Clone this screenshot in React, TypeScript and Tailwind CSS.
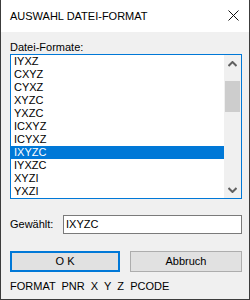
import { useState } from "react";

const formats = [
  "IYXZ",
  "CXYZ",
  "CYXZ",
  "XYZC",
  "YXZC",
  "ICXYZ",
  "ICYXZ",
  "IXYZC",
  "IYXZC",
  "XYZI",
  "YXZI",
];

export default function App() {
  const [selected, setSelected] = useState("IXYZC");

  return (
    <div
      className="flex h-[300px] w-[250px] flex-col border-r border-b border-l border-[#3c3c3c] bg-[#f0f0f0] text-[11px] text-black"
      style={{ fontFamily: '"Liberation Sans", Arial, sans-serif' }}
    >
      {/* title bar */}
      <div className="flex h-[32px] shrink-0 items-center justify-between bg-white pl-[9px] pr-[10px]">
        <span className="text-[11px]">AUSWAHL DATEI-FORMAT</span>
        <svg width="11" height="11" viewBox="0 0 11 11" className="mb-[1px]">
          <path d="M0.5 0.5 L10.5 10.5 M10.5 0.5 L0.5 10.5" stroke="#111" strokeWidth="1" />
        </svg>
      </div>

      <div className="flex flex-1 flex-col pl-[9px] pr-[7px]">
        <div className="mt-[9px] h-[13px] leading-[13px]">Datei-Formate:</div>

        {/* list box */}
        <div className="flex h-[145px] border border-[#0078d7] bg-white">
          <div className="flex-1 overflow-hidden">
            {formats.map((f) => (
              <div
                key={f}
                onClick={() => setSelected(f)}
                className={
                  f === selected
                    ? "h-[13px] bg-[#0078d7] pl-[3px] leading-[13px] text-white"
                    : "h-[13px] pl-[3px] leading-[13px]"
                }
              >
                {f}
              </div>
            ))}
          </div>
          <div className="flex w-[17px] flex-col bg-[#f0f0f0]">
            <div className="flex h-[17px] items-center justify-center">
              <svg width="9" height="6" viewBox="0 0 9 6">
                <path d="M0.5 5 L4.5 1 L8.5 5" stroke="#606060" strokeWidth="2" fill="none" />
              </svg>
            </div>
            <div className="ml-[1px] mr-[1px] mt-[9px] h-[31px] bg-[#cdcdcd]" />
            <div className="flex-1" />
            <div className="flex h-[17px] items-center justify-center">
              <svg width="9" height="6" viewBox="0 0 9 6">
                <path d="M0.5 1 L4.5 5 L8.5 1" stroke="#606060" strokeWidth="2" fill="none" />
              </svg>
            </div>
          </div>
        </div>

        {/* selected field */}
        <div className="mt-[16px] flex items-center">
          <span className="w-[53px]">Gewählt:</span>
          <div className="flex h-[19px] flex-1 items-center border border-[#7a7a7a] bg-white pl-[2px]">
            {selected}
          </div>
        </div>

        {/* buttons */}
        <div className="mt-[17px] flex gap-[10px]">
          <button className="h-[21px] w-[110px] border-2 border-[#0078d7] bg-[#e1e1e1] leading-none">
            O K
          </button>
          <button className="h-[21px] flex-1 border border-[#adadad] bg-[#e1e1e1] leading-none">
            Abbruch
          </button>
        </div>

        <div className="mt-[8px] whitespace-pre leading-[13px]">FORMAT  PNR  X  Y  Z  PCODE</div>
      </div>
    </div>
  );
}
